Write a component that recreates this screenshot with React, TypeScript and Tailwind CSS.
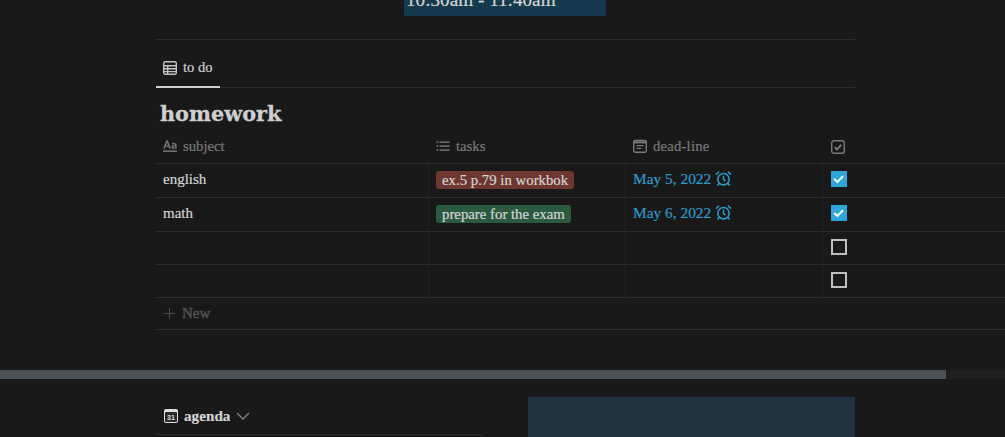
import React from 'react';
import { Plus, AlarmClock } from 'lucide-react';

const TableIcon = () => (
  <svg viewBox="0 0 14 14" className="h-[14px] w-[14px]" fill="none" stroke="#c4c4c4" strokeWidth="1.4">
    <rect x="0.7" y="0.7" width="12.6" height="12.6" rx="1.6" />
    <path d="M.7 4.7h12.6M.7 7.7h12.6M.7 10.6h12.6M4.7 4.7v8.6" />
  </svg>
);

const AaIcon = () => (
  <svg viewBox="0 0 14 14" className="h-[14px] w-[14px]" fill="#7a7a7a" stroke="#7a7a7a" strokeWidth="0.3">
    <path d="M.4 9.6 3.4 1.6h1.3l3 8H6.4l-.7-2H2.4l-.7 2H.4Zm2.4-3h2.5L4.05 3 2.8 6.6Z" />
    <path d="M10.8 3.9c1.5 0 2.6.7 2.6 2.1v3.6h-1.1V9c-.4.5-1 .8-1.8.8-1.2 0-2-.7-2-1.7 0-1.1.9-1.7 2.3-1.8l1.4-.1V6c0-.7-.5-1.1-1.4-1.1-.7 0-1.2.3-1.6.7l-.6-.7c.5-.6 1.3-1 2.2-1Zm1.5 3.2-1.2.1c-.9.1-1.4.4-1.4.9s.4.8 1 .8c.9 0 1.6-.5 1.6-1.3v-.5Z" />
    <rect x="0" y="11.6" width="14" height="1.2" />
  </svg>
);

const ListIcon = () => (
  <svg viewBox="0 0 14 14" className="h-[14px] w-[14px]" fill="#7a7a7a">
    <rect x="0.4" y="2.2" width="2" height="1.6" rx="0.5" />
    <rect x="0.4" y="6.2" width="2" height="1.6" rx="0.5" />
    <rect x="0.4" y="10.2" width="2" height="1.6" rx="0.5" />
    <rect x="3.6" y="2.4" width="10" height="1.4" />
    <rect x="3.6" y="6.4" width="10" height="1.4" />
    <rect x="3.6" y="10.4" width="10" height="1.4" />
  </svg>
);

const DateIcon = () => (
  <svg viewBox="0 0 14 14" className="h-[14px] w-[14px]" fill="none" stroke="#7a7a7a" strokeWidth="1.4">
    <rect x="0.7" y="1.5" width="12.6" height="11.8" rx="1.6" />
    <path d="M.7 3.4h12.6" strokeWidth="2" />
    <path d="M3.6 6.6h6.8M3.6 9.4h4.6" />
  </svg>
);

const CheckHeaderIcon = () => (
  <svg viewBox="0 0 14 14" className="h-[14px] w-[14px]" fill="none" stroke="#7a7a7a" strokeWidth="1.4">
    <rect x="0.7" y="0.7" width="12.6" height="12.6" rx="2.4" />
    <path d="m3.8 7.2 2.2 2.2 4.2-4.6" strokeWidth="2" />
  </svg>
);

const CalendarIcon = () => (
  <div className="flex h-[14px] w-[14px] flex-col overflow-hidden rounded-[2px] bg-[#dcdcdc]">
    <div className="h-[3px] shrink-0" />
    <div className="mx-[1px] mb-[1px] flex flex-1 items-center justify-center rounded-[1px] bg-[#2a2a2a] font-['Liberation_Sans',sans-serif] text-[7px] leading-none font-bold text-[#dcdcdc] [-webkit-text-stroke:0]">
      31
    </div>
  </div>
);

const Chevron = () => (
  <svg viewBox="0 0 14 8" className="h-[8px] w-[14px]" fill="none" stroke="#7a7a7a" strokeWidth="1.5">
    <path d="m1 1 6 6 6-6" />
  </svg>
);

const Checkbox = ({ checked }: { checked: boolean }) =>
  checked ? (
    <div className="mb-[3px] flex h-4 w-4 items-center justify-center bg-[#2ea8dc]">
      <svg viewBox="0 0 16 16" className="h-4 w-4" fill="none" stroke="#ffffff" strokeWidth="2">
        <path d="m3.2 8 3.2 2.9 5.6-5.6" />
      </svg>
    </div>
  ) : (
    <div className="mb-[2px] h-4 w-4 border-2 border-[#c0c0c0]" />
  );

const DateCell = ({ value }: { value: string }) => (
  <div className="flex items-center gap-[4px] pb-[3px] text-[15.4px] text-[#2a9bc9]">
    <span>{value}</span>
    <AlarmClock className="mb-[1px] h-[17px] w-[17px]" strokeWidth={2.2} />
  </div>
);

const rows = [
  { subject: 'english', task: 'ex.5 p.79 in workbok', tone: 'bg-[#6e3630]', date: 'May 5, 2022', done: true, h: 'h-[34px]' },
  { subject: 'math', task: 'prepare for the exam', tone: 'bg-[#2b5a3e]', date: 'May 6, 2022', done: true, h: 'h-[34px]' },
  { subject: '', task: '', tone: '', date: '', done: false, h: 'h-[33px]' },
  { subject: '', task: '', tone: '', date: '', done: false, h: 'h-[33px]' },
];

export default function App() {
  return (
    <div className="h-[437px] w-[1005px] overflow-hidden bg-[#191919] font-['Liberation_Serif',serif] text-[15px] text-[#d4d4d4] [-webkit-text-stroke:0.2px]">
      <div className="ml-[156px] w-[849px]">
        <div className="ml-[248px] -mt-[10px] flex h-[26px] w-[202px] items-start bg-[#153a4e] pl-[2px] text-[19.2px] leading-[19px]">
          10:30am - 11:40am
        </div>
        <div className="mt-[23px] w-[699px] border-t border-[#2c2c2c]" />

        <div className="flex h-[48px] w-[699px] border-b border-[#2c2c2c]">
          <div className="-mb-px flex w-[64px] items-center gap-[6px] border-b-2 border-[#cfcfcf] pt-[9px] pl-[7px] text-[14.5px] text-[#cfcfcf]">
            <TableIcon />
            <span>to do</span>
          </div>
        </div>

        <h1 className="mt-[9px] ml-[4px] h-[33px] font-['DejaVu_Serif',serif] text-[20.8px] leading-[33px] font-bold text-[#cfcfcf] [-webkit-text-stroke:0.3px]">
          homework
        </h1>

        <div className="flex h-[34px] items-center border-b border-[#2c2c2c] text-[14.7px] text-[#7a7a7a]">
          <div className="flex w-[273px] items-center gap-[6px] pl-[7px]">
            <AaIcon />
            <span>subject</span>
          </div>
          <div className="flex w-[197px] items-center gap-[6px] pl-[7px]">
            <ListIcon />
            <span>tasks</span>
          </div>
          <div className="flex w-[197px] items-center gap-[6px] pl-[7px]">
            <DateIcon />
            <span className="tracking-[0.2px]">dead-line</span>
          </div>
          <div className="flex flex-1 items-center pl-[8px]">
            <CheckHeaderIcon />
          </div>
        </div>

        {rows.map((row, i) => (
          <div key={i} className={`flex ${row.h} items-stretch border-b border-[#2c2c2c]`}>
            <div className="flex w-[273px] items-center border-r border-[#242424] pb-[2px] pl-[7px]">{row.subject}</div>
            <div className="flex w-[197px] items-center border-r border-[#242424] pb-[2px] pl-[7px]">
              {row.task && (
                <span className={`rounded-[3px] px-[6px] text-[14.8px] leading-[18px] ${row.tone}`}>{row.task}</span>
              )}
            </div>
            <div className="flex w-[197px] items-center border-r border-[#242424] pl-[7px]">
              {row.date && <DateCell value={row.date} />}
            </div>
            <div className="flex flex-1 items-center pl-[8px]">
              <Checkbox checked={row.done} />
            </div>
          </div>
        ))}

        <div className="flex h-[32px] items-center gap-[4px] border-b border-[#2c2c2c] pl-[5px] text-[15px] text-[#4f4f4f] [-webkit-text-stroke:0.5px]">
          <Plus className="h-[17px] w-[17px]" strokeWidth={1.4} />
          <span>New</span>
        </div>
      </div>

      <div className="mt-[40px] flex h-[9px] bg-[#1f1f1f]">
        <div className="h-full w-[946px] bg-[#4a5054]" />
      </div>

      <div className="ml-[156px] mt-[18px] flex w-[699px] items-start justify-between">
        <div className="w-[326px] pt-[9px]">
          <div className="flex h-[29px] items-center gap-[6px] border-b border-[#2c2c2c] pb-[8px] pl-[8px] text-[15.2px] font-bold text-[#d4d4d4]">
            <CalendarIcon />
            <span>agenda</span>
            <Chevron />
          </div>
        </div>
        <div className="h-[60px] w-[327px] bg-[#20333e]" />
      </div>
    </div>
  );
}
